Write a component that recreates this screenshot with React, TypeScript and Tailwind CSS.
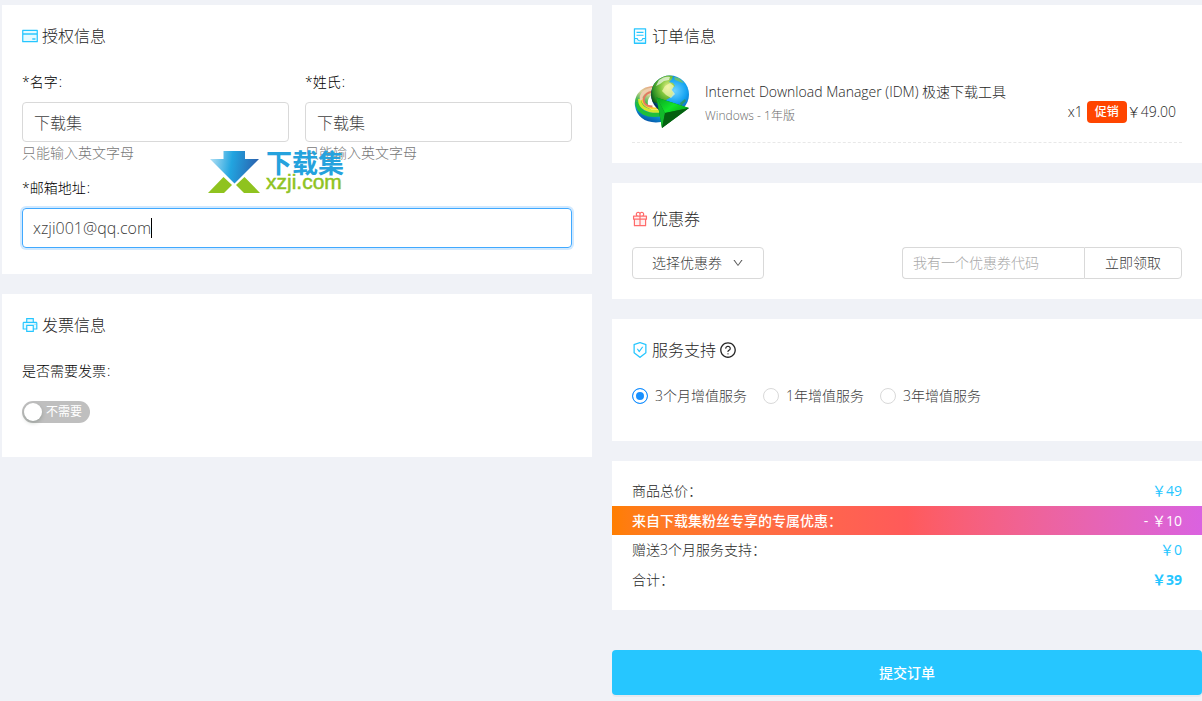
import React, { useState } from "react";
import {
  AiOutlineDown,
  AiOutlineQuestionCircle,
  AiOutlineSafetyCertificate,
  AiTwotoneContainer,
  AiTwotoneCreditCard,
  AiTwotoneGift,
  AiTwotonePrinter,
} from "react-icons/ai";

const blueIcon = "-mx-px size-[18px] shrink-0 text-[#26c6ff] [&_path[fill^='#']]:fill-[#e6faff]";
const redIcon = "-mx-px size-[18px] shrink-0 text-[#ff6b6b] [&_path[fill^='#']]:fill-[#fff0f0]";

function CardTitle({ icon, children, extra }: { icon: React.ReactNode; children: React.ReactNode; extra?: React.ReactNode }) {
  return (
    <h2 className="flex h-6 items-center gap-1 text-base text-[#262626]">
      {icon}
      <span>{children}</span>
      {extra}
    </h2>
  );
}

function NameField({ id, label }: { id: string; label: string }) {
  return (
    <div className="min-w-0 flex-1">
      <label htmlFor={id} className="block h-5 text-sm leading-5 text-black">
        *{label}
        <span className="ml-px">:</span>
      </label>
      <input
        id={id}
        type="text"
        defaultValue="下载集"
        className="mt-2.5 block h-10 w-full rounded-sm border border-[#d9d9d9] px-[11px] text-base text-[#404040] outline-none"
      />
      <p className="mt-px h-5 text-sm leading-5 text-[#787878]">只能输入英文字母</p>
    </div>
  );
}

function DownloadManagerLogo() {
  return (
    <svg viewBox="0 0 60 60" className="size-15 shrink-0" aria-hidden="true">
      <defs>
        <radialGradient id="ocean" cx="0.62" cy="0.4" r="0.62">
          <stop offset="0" stopColor="#6fd2ff" />
          <stop offset="0.5" stopColor="#16a4f2" />
          <stop offset="0.85" stopColor="#0869bd" />
          <stop offset="1" stopColor="#02355f" />
        </radialGradient>
        <radialGradient id="land" cx="0.7" cy="0.4" r="0.8">
          <stop offset="0" stopColor="#e8f08a" />
          <stop offset="0.4" stopColor="#7fc63c" />
          <stop offset="0.8" stopColor="#2b8f24" />
          <stop offset="1" stopColor="#0d4f16" />
        </radialGradient>
        <linearGradient id="outerBand" x1="0.6" y1="0" x2="0.3" y2="1">
          <stop offset="0" stopColor="#e9a080" />
          <stop offset="0.25" stopColor="#d8d39a" />
          <stop offset="0.5" stopColor="#3cb54a" />
          <stop offset="0.72" stopColor="#0a8fd0" />
          <stop offset="1" stopColor="#0346a0" />
        </linearGradient>
        <linearGradient id="arrowTop" x1="0" y1="0" x2="1" y2="0.6">
          <stop offset="0" stopColor="#0a9f22" />
          <stop offset="0.6" stopColor="#12e32a" />
          <stop offset="1" stopColor="#05b51a" />
        </linearGradient>
      </defs>
      <path d="M22 14C9 14 2 23 3 34c2 12 12 18 26 16l3-12c-9 4-15 0-16-5-1-6 2-10 8-12z" fill="url(#outerBand)" />
      <path d="M5.500 30c0 10 9 15 25 12" fill="none" stroke="#1fbf3a" strokeWidth="4" />
      <path d="M7.500 27c0 9 8 13.500 22 12" fill="none" stroke="#d2e82c" strokeWidth="3" />
      <path d="M10 26c0 7 6 11 18 10.500" fill="none" stroke="#ffd42e" strokeWidth="2" />
      <path d="M21 17C12 18 8 23 9.500 28" fill="none" stroke="#efcdae" strokeWidth="3" />
      <path d="M22 19.500c-8 .5-12 6-9.500 11.500 2 3 4 3.500 8 3.500" fill="none" stroke="#e27a62" strokeWidth="2" />
      <circle cx="38" cy="22.500" r="19" fill="url(#ocean)" />
      <path
        d="M37 3.600c-7 .5-13 4.500-16 10.500-2.500 6-2 12 0 16l3 1 5 1 5-4 5-3 2-4-2-4 4-3-2-3-4-1 3-3 1-3z"
        fill="url(#land)"
      />
      <path d="M33 14l5-3 4 3-2 4 3 4-4 4-5-3-4-4z" fill="#f6f8b4" opacity="0.7" />
      <path d="M27 8c4-3 8-4 11-3l-1 3-5 1-4 3-4 2z" fill="#fff" opacity="0.65" />
      <path d="M42 5l5 1 5 5-4-1-5-2z" fill="#7cc65a" opacity="0.8" />
      <path d="M48 31l5-4 1 2-5 5z" fill="#2f9a3c" opacity="0.7" />
      <path d="M24.500 25.500L57 36 30 56z" fill="#087a18" />
      <path d="M24.500 25.500L57 36l-24 5z" fill="url(#arrowTop)" />
      <path d="M24.500 25.500L33 41l-3 15z" fill="#12b92b" />
      <path d="M33 41l24-5-27 20z" fill="#046110" />
    </svg>
  );
}

function Watermark() {
  return (
    <div className="pointer-events-none absolute top-[146px] left-[206px] flex items-center gap-1.5">
      <svg viewBox="0 0 52 42" className="h-[42px] w-[52px]" aria-hidden="true">
        <defs>
          <linearGradient id="downArrow" x1="0" y1="0.2" x2="1" y2="0.3">
            <stop offset="0" stopColor="#b5e1f5" />
            <stop offset="0.45" stopColor="#22a5e0" />
            <stop offset="1" stopColor="#2a60ad" />
          </linearGradient>
        </defs>
        <path d="M15.500 0h21.500v8h14L26.500 32.500 2 8h13.500z" fill="url(#downArrow)" />
        <path d="M15.500 26l8.500 8-8 8H0zM36.500 26L52 42H36l-8-8z" fill="#8fc31f" />
      </svg>
      <div className="pb-0.5">
        <div className="text-[26px] leading-[22px] font-bold text-[#25a2dd]">下载集</div>
        <div className="font-['Liberation_Sans'] text-[21px] leading-4 font-normal text-[#8fc31f] [-webkit-text-stroke:0.5px_#8fc31f]">
          xzji.com
        </div>
      </div>
    </div>
  );
}

const services = ["3个月增值服务", "1年增值服务", "3年增值服务"];

export default function App() {
  const [invoice, setInvoice] = useState(false);
  const [service, setService] = useState(services[0]);

  return (
    <main className="grid min-h-screen grid-cols-2 items-start gap-5 bg-[#f0f2f7] pt-[5px] pb-1.5 pl-0.5 font-['Open_Sans','Noto_Sans_CJK_SC',sans-serif] text-sm font-light text-[#262626]">
      <div className="flex min-w-0 flex-col gap-5">
        <section className="relative bg-white px-5 pt-[19px] pb-[26px]">
          <CardTitle icon={<AiTwotoneCreditCard className={blueIcon} />}>授权信息</CardTitle>
          <div className="mt-6 flex gap-4">
            <NameField id="given-name" label="名字" />
            <NameField id="family-name" label="姓氏" />
          </div>
          <label htmlFor="email" className="mt-[15px] block h-5 leading-5 text-black">
            *邮箱地址<span className="ml-px">:</span>
          </label>
          <label
            htmlFor="email"
            className="mt-2.5 flex h-10 cursor-text items-center rounded-sm border border-[#40a9ff] px-2.5 ring-2 ring-[#1890ff]/20"
          >
            <input
              id="email"
              type="email"
              defaultValue="xzji001@qq.com"
              className="field-sizing-content min-w-0 text-base text-[#404040] caret-transparent outline-none"
            />
            <span className="h-5 w-px bg-black" />
          </label>
          <Watermark />
        </section>

        <section className="bg-white px-5 pt-[19px] pb-[34px]">
          <CardTitle icon={<AiTwotonePrinter className={blueIcon} />}>发票信息</CardTitle>
          <label htmlFor="invoice" className="mt-6 block h-5 leading-5 text-black">
            是否需要发票<span className="ml-px">:</span>
          </label>
          <button
            id="invoice"
            type="button"
            role="switch"
            aria-checked={invoice}
            onClick={() => setInvoice(!invoice)}
            className="mt-5 flex h-[22px] items-center gap-1 rounded-full bg-[#bfbfbf] pr-2 pl-0.5 text-xs font-normal text-white"
          >
            <span className="size-[18px] rounded-full bg-white shadow-[0_2px_4px_rgba(0,35,11,0.2)]" />
            {invoice ? "需要" : "不需要"}
          </button>
        </section>
      </div>

      <div className="flex min-w-0 flex-col gap-5">
        <section className="bg-white px-5 pt-[19px] pb-5">
          <CardTitle icon={<AiTwotoneContainer className={blueIcon} />}>订单信息</CardTitle>
          <div className="mt-6 flex border-b border-dashed border-[#e8e8e8] pb-2.5">
            <DownloadManagerLogo />
            <div className="ml-[13px] min-w-0 flex-1 pt-2">
              <h3 className="leading-6">Internet Download Manager (IDM) 极速下载工具</h3>
              <p className="text-xs leading-6 text-[#6b6b6b]">Windows - 1年版</p>
            </div>
            <div className="flex items-center pt-5 pr-1.5">
              <span className="mr-1">x1</span>
              <span className="flex h-[22px] items-center rounded-sm bg-[#ff4500] px-2 text-xs font-medium text-white">促销</span>
              <span>￥49.00</span>
            </div>
          </div>
        </section>

        <section className="bg-white px-5 pt-6 pb-5">
          <CardTitle icon={<AiTwotoneGift className={redIcon} />}>优惠券</CardTitle>
          <div className="mt-4 flex justify-between">
            <div className="relative">
              <select
                aria-label="选择优惠券"
                className="h-8 w-33 appearance-none rounded-sm border border-[#d9d9d9] bg-white pl-[19px] text-[#404040]"
              >
                <option>选择优惠券</option>
              </select>
              <AiOutlineDown className="pointer-events-none absolute top-2.5 right-5 size-3 text-[#595959]" />
            </div>
            <form className="flex h-8" onSubmit={(e) => e.preventDefault()}>
              <input
                type="text"
                aria-label="优惠券代码"
                placeholder="我有一个优惠券代码"
                className="w-[182px] rounded-l-sm border border-r-0 border-[#d9d9d9] px-2.5 outline-none placeholder:text-[#a8a8a8]"
              />
              <button type="submit" className="rounded-r-sm border border-[#d9d9d9] px-5 text-[#404040]">
                立即领取
              </button>
            </form>
          </div>
        </section>

        <section className="bg-white px-5 pt-[19px] pb-[35px]">
          <CardTitle
            icon={<AiOutlineSafetyCertificate className={blueIcon} />}
            extra={<AiOutlineQuestionCircle className="-mx-px size-[18px]" />}
          >
            服务支持
          </CardTitle>
          <div role="radiogroup" aria-label="服务支持" className="mt-6 flex gap-4 text-[#404040]">
            {services.map((name) => (
              <label key={name} className="flex h-5 items-center gap-[7px]">
                <input
                  type="radio"
                  name="service"
                  checked={service === name}
                  onChange={() => setService(name)}
                  className="size-4 appearance-none rounded-full border border-[#d9d9d9] bg-white checked:border-[#1890ff] checked:bg-[#1890ff] checked:shadow-[inset_0_0_0_3px_white]"
                />
                {name}
              </label>
            ))}
          </div>
        </section>

        <section className="bg-white py-[15px]">
          <dl>
            <div className="flex h-[30px] items-center justify-between px-5">
              <dt>商品总价：</dt>
              <dd className="font-normal text-[#26c6ff]">￥49</dd>
            </div>
            <div className="flex h-[29px] items-center justify-between bg-linear-to-r from-[#ff7e00] via-[#ff5a5a] to-[#da62e0] px-5 font-medium text-white">
              <dt>来自下载集粉丝专享的专属优惠：</dt>
              <dd className="font-normal">- ￥10</dd>
            </div>
            <div className="flex h-[30px] items-center justify-between px-5">
              <dt>赠送3个月服务支持：</dt>
              <dd className="font-normal text-[#26c6ff]">￥0</dd>
            </div>
            <div className="flex h-[30px] items-center justify-between px-5">
              <dt>合计：</dt>
              <dd className="font-bold text-[#26c6ff]">￥39</dd>
            </div>
          </dl>
        </section>

        <button
          type="button"
          className="mt-5 h-[45px] w-full rounded-sm bg-[#26c6ff] font-medium text-white shadow-[0_2px_0_rgba(0,0,0,0.04)]"
        >
          提交订单
        </button>
      </div>
    </main>
  );
}
